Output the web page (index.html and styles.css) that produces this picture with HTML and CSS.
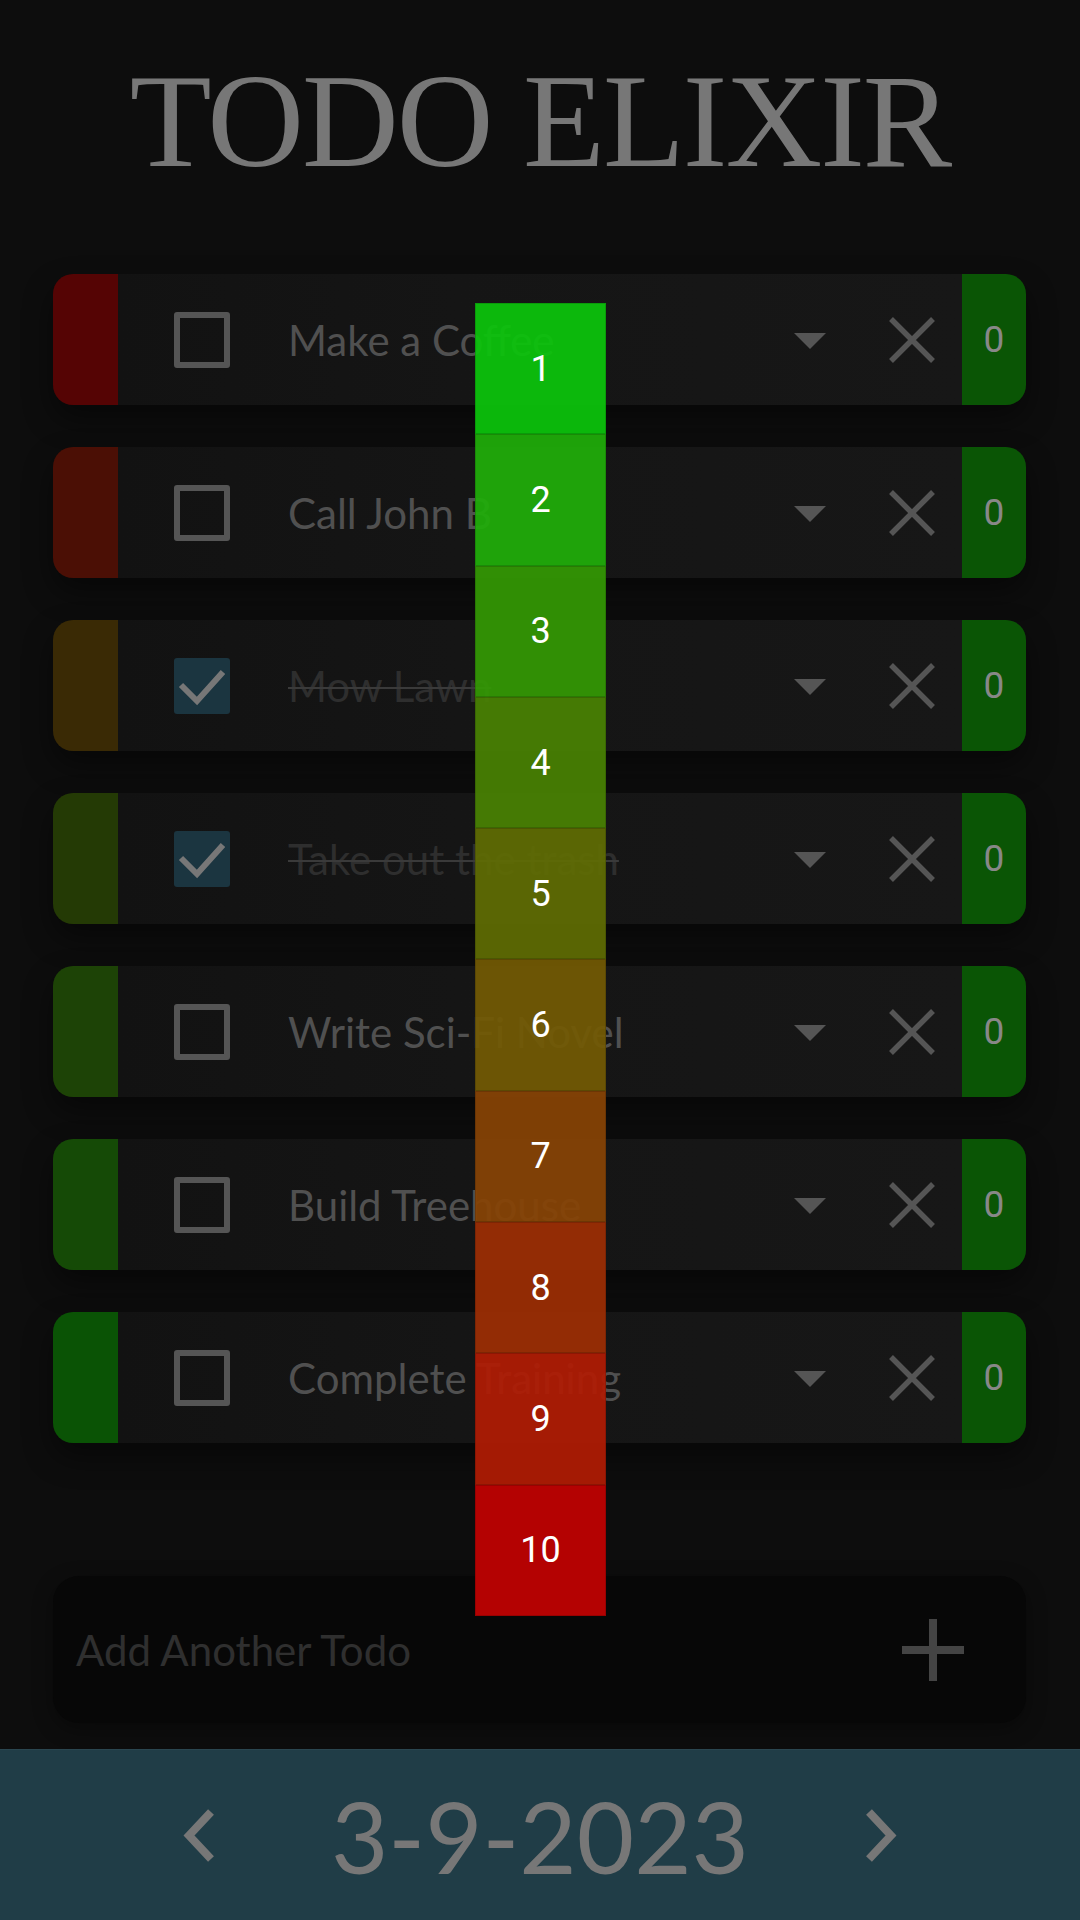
FILE: index.html
```html
<!DOCTYPE html>
<html lang="en">
<head>
  <meta charset="UTF-8">
  <meta name="viewport" content="width=device-width, initial-scale=1.0">
  <title>Todo Elixir</title>
  <link rel="stylesheet" href="styles.css">
</head>
<body>
  <header class="app-title">TODO ELIXIR</header>

  <main class="list-area">
    <ul class="todo-list">
      <li class="todo">
        <div class="prio-strip prio-strip-1"></div>
        <div class="todo-body">
          <span class="check-box"></span>
          <span class="todo-text">Make a Coffee</span>
          <span class="drop-arrow"></span>
          <svg class="delete-btn" viewBox="0 0 46 46"><path d="M2 2 L44 44 M44 2 L2 44"/></svg>
        </div>
        <div class="count-box">0</div>
      </li>
      <li class="todo">
        <div class="prio-strip prio-strip-2"></div>
        <div class="todo-body">
          <span class="check-box"></span>
          <span class="todo-text">Call John B</span>
          <span class="drop-arrow"></span>
          <svg class="delete-btn" viewBox="0 0 46 46"><path d="M2 2 L44 44 M44 2 L2 44"/></svg>
        </div>
        <div class="count-box">0</div>
      </li>
      <li class="todo done">
        <div class="prio-strip prio-strip-3"></div>
        <div class="todo-body">
          <span class="check-box"><svg viewBox="0 0 56 56"><path d="M7 27 L23 43 L49 14"/></svg></span>
          <span class="todo-text">Mow Lawn</span>
          <span class="drop-arrow"></span>
          <svg class="delete-btn" viewBox="0 0 46 46"><path d="M2 2 L44 44 M44 2 L2 44"/></svg>
        </div>
        <div class="count-box">0</div>
      </li>
      <li class="todo done">
        <div class="prio-strip prio-strip-4"></div>
        <div class="todo-body">
          <span class="check-box"><svg viewBox="0 0 56 56"><path d="M7 27 L23 43 L49 14"/></svg></span>
          <span class="todo-text">Take out the trash</span>
          <span class="drop-arrow"></span>
          <svg class="delete-btn" viewBox="0 0 46 46"><path d="M2 2 L44 44 M44 2 L2 44"/></svg>
        </div>
        <div class="count-box">0</div>
      </li>
      <li class="todo">
        <div class="prio-strip prio-strip-5"></div>
        <div class="todo-body">
          <span class="check-box"></span>
          <span class="todo-text">Write Sci-Fi Novel</span>
          <span class="drop-arrow"></span>
          <svg class="delete-btn" viewBox="0 0 46 46"><path d="M2 2 L44 44 M44 2 L2 44"/></svg>
        </div>
        <div class="count-box">0</div>
      </li>
      <li class="todo">
        <div class="prio-strip prio-strip-6"></div>
        <div class="todo-body">
          <span class="check-box"></span>
          <span class="todo-text">Build Treehouse</span>
          <span class="drop-arrow"></span>
          <svg class="delete-btn" viewBox="0 0 46 46"><path d="M2 2 L44 44 M44 2 L2 44"/></svg>
        </div>
        <div class="count-box">0</div>
      </li>
      <li class="todo">
        <div class="prio-strip prio-strip-7"></div>
        <div class="todo-body">
          <span class="check-box"></span>
          <span class="todo-text">Complete Training</span>
          <span class="drop-arrow"></span>
          <svg class="delete-btn" viewBox="0 0 46 46"><path d="M2 2 L44 44 M44 2 L2 44"/></svg>
        </div>
        <div class="count-box">0</div>
      </li>
    </ul>

    <div class="add-todo">
      <span class="add-placeholder">Add Another Todo</span>
      <svg class="add-btn" viewBox="0 0 62 62"><path d="M31 0 V62 M0 31 H62"/></svg>
    </div>
  </main>

  <footer class="date-bar">
    <svg class="chevron" viewBox="0 0 32 53"><path d="M29 3 L7 26.5 L29 50"/></svg>
    <span class="date-label">3-9-2023</span>
    <svg class="chevron" viewBox="0 0 32 53"><path d="M3 3 L25 26.5 L3 50"/></svg>
  </footer>

  <!-- priority picker, open over the first todo -->
  <ul class="priority-menu">
    <li class="prio-item p1">1</li>
    <li class="prio-item p2">2</li>
    <li class="prio-item p3">3</li>
    <li class="prio-item p4">4</li>
    <li class="prio-item p5">5</li>
    <li class="prio-item p6">6</li>
    <li class="prio-item p7">7</li>
    <li class="prio-item p8">8</li>
    <li class="prio-item p9">9</li>
    <li class="prio-item p10">10</li>
  </ul>
</body>
</html>
```

FILE: styles.css
```css
html, body {
  margin: 0;
  padding: 0;
}
body {
  position: relative;
  width: 1080px;
  min-height: 1920px;
  display: flex;
  flex-direction: column;
  background-color: #0d0d0d;
  font-family: Lato, "Open Sans", sans-serif;
  color: #555;
}
ul {
  list-style: none;
  margin: 0;
  padding: 0;
}

.app-title {
  padding-top: 54px;
  font-family: "Liberation Serif", serif;
  font-size: 134px;
  line-height: 134px;
  letter-spacing: -2px;
  text-align: center;
  color: #777;
}

.list-area {
  flex: 1;
  padding: 86px 54px 0 53px;
}
.todo-list {
  display: flex;
  flex-direction: column;
  gap: 42px;
}
.todo {
  display: flex;
  height: 131px;
  border-radius: 20px;
  overflow: hidden;
  box-shadow: 0 14px 30px rgba(0, 0, 0, 0.45);
}
.prio-strip {
  width: 65px;
  flex-shrink: 0;
}
.prio-strip-1 { background-color: #550404; }
.prio-strip-2 { background-color: #4b0f05; }
.prio-strip-3 { background-color: #3a2a05; }
.prio-strip-4 { background-color: #243a05; }
.prio-strip-5 { background-color: #1d4306; }
.prio-strip-6 { background-color: #154a06; }
.prio-strip-7 { background-color: #0a5305; }

.todo-body {
  flex: 1;
  display: flex;
  align-items: center;
  padding: 0 27px 0 56px;
  background: linear-gradient(90deg, #121212, #151515 40%, #171717);
}
.check-box {
  width: 56px;
  height: 56px;
  box-sizing: border-box;
  border: 6px solid #555;
  border-radius: 3px;
  flex-shrink: 0;
}
.done .check-box {
  border: none;
  background-color: #1b3540;
}
.check-box svg {
  display: block;
  width: 56px;
  height: 56px;
  fill: none;
  stroke: #777;
  stroke-width: 6;
}
.todo-text {
  flex: 1;
  margin-left: 58px;
  font-size: 42px;
  white-space: nowrap;
  color: #505050;
}
.done .todo-text {
  color: #2e2e2e;
  text-decoration: line-through;
  text-decoration-color: #3a3a3a;
  text-decoration-thickness: 2px;
}
.drop-arrow {
  width: 0;
  height: 0;
  margin-top: 3px;
  border-left: 16.5px solid transparent;
  border-right: 16.5px solid transparent;
  border-top: 16px solid #555;
}
.delete-btn {
  width: 46px;
  height: 46px;
  margin-left: 63px;
  fill: none;
  stroke: #555;
  stroke-width: 5.5;
}
.count-box {
  width: 64px;
  flex-shrink: 0;
  display: flex;
  align-items: center;
  justify-content: center;
  background-color: #0a5505;
  color: #888;
  font-family: Roboto, sans-serif;
  font-size: 37px;
}

.add-todo {
  margin-top: 133px;
  height: 147px;
  display: flex;
  align-items: center;
  justify-content: space-between;
  padding: 0 62px 0 23px;
  border-radius: 26px;
  background-color: #070707;
  box-shadow: 0 6px 20px rgba(0, 0, 0, 0.35);
}
.add-placeholder {
  font-size: 42px;
  color: #2f2f2f;
}
.add-btn {
  width: 62px;
  height: 62px;
  fill: none;
  stroke: #444;
  stroke-width: 8;
}

.date-bar {
  height: 171px;
  box-sizing: border-box;
  border-top: 1px solid #2a4650;
  background-color: #203d47;
  display: flex;
  align-items: center;
  justify-content: center;
  gap: 117px;
}
.chevron {
  width: 32px;
  height: 53px;
  overflow: visible;
  fill: none;
  stroke: #777;
  stroke-width: 8;
}
.date-label {
  font-size: 99px;
  line-height: 1;
  color: #777;
}

.priority-menu {
  position: absolute;
  top: 303px;
  left: 475px;
  width: 131px;
}
.prio-item {
  height: 131.3px;
  box-sizing: border-box;
  border: 1px solid rgba(0, 0, 0, 0.15);
  display: flex;
  align-items: center;
  justify-content: center;
  font-family: Roboto, sans-serif;
  font-size: 36px;
  color: #fff;
}
.p1 { background-color: rgba(12, 197, 12, 0.93); }
.p2 { background-color: rgba(32, 174, 10, 0.93); }
.p3 { background-color: rgba(52, 153, 4, 0.93); }
.p4 { background-color: rgba(73, 130, 3, 0.93); }
.p5 { background-color: rgba(96, 109, 3, 0.93); }
.p6 { background-color: rgba(115, 90, 4, 0.93); }
.p7 { background-color: rgba(136, 68, 5, 0.93); }
.p8 { background-color: rgba(157, 46, 4, 0.93); }
.p9 { background-color: rgba(176, 28, 4, 0.93); }
.p10 { background-color: rgba(194, 2, 2, 0.93); }
```
